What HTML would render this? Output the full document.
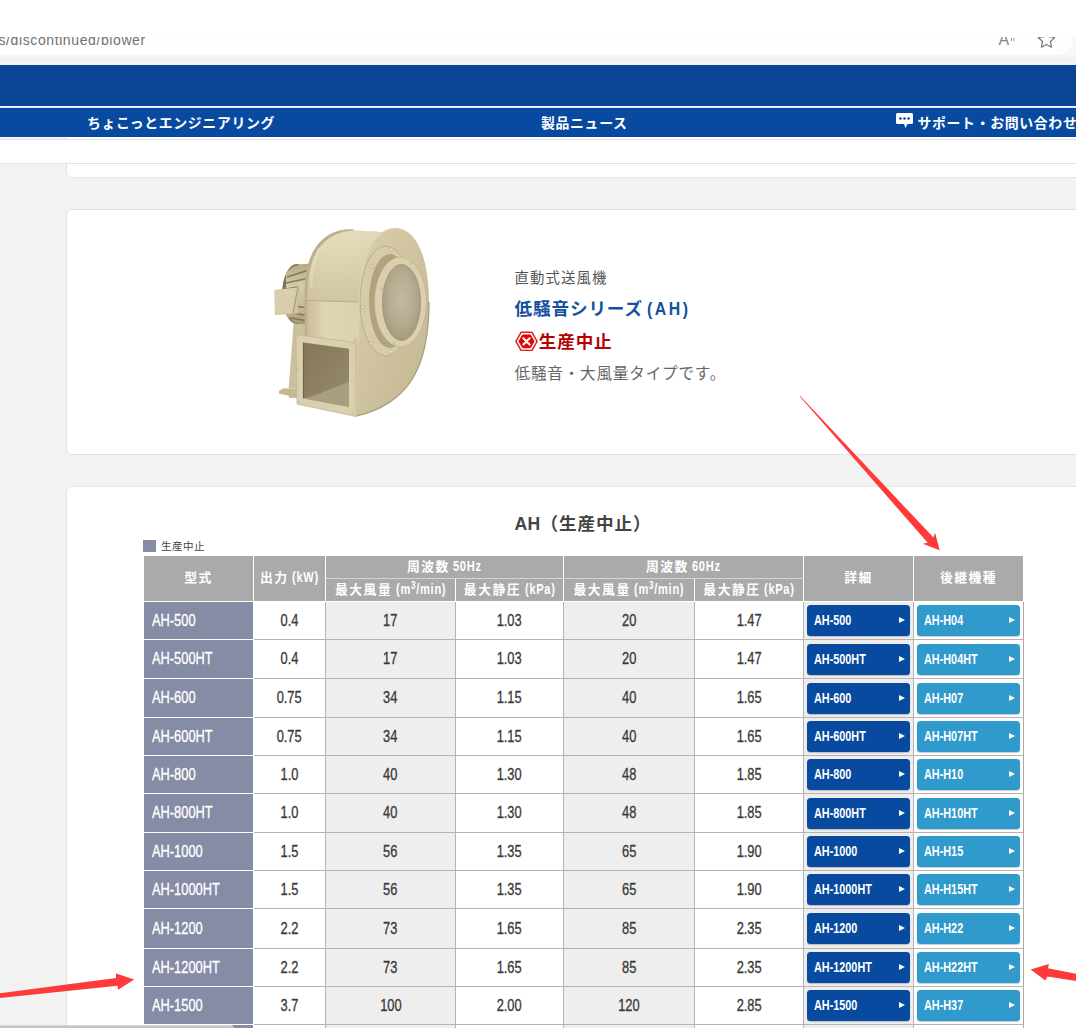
<!DOCTYPE html>
<html lang="ja">
<head>
<meta charset="utf-8">
<title>生産中止機種 送風機</title>
<style>
*{box-sizing:border-box}
html,body{margin:0;padding:0}
html,body{width:1076px;height:1028px;overflow:hidden;background:#f2f2f2}
#page{width:1076px;height:1028px;overflow:hidden;position:relative;background:#f2f2f2;font-family:"Liberation Sans","Noto Sans CJK JP",sans-serif;color:#444}
#chrome{position:absolute;left:0;top:0;width:1076px;height:65px;background:linear-gradient(#fff 0,#fff 37px,#f7f7f7 37px,#f7f7f7 55px,#f5f5f5 56px,#f3f3f3 59px,#ebebeb 59.500px,#f2f2f2 60.500px,#f2f2f2 65px);overflow:hidden}
#urlbar{position:absolute;left:-30px;top:37px;width:1102.500px;height:18.200px;background:#fefefe;border-radius:0 0 15px 15px;overflow:hidden}
#url{position:absolute;left:28.500px;top:-5.700px;font-size:14px;line-height:18px;color:#727272;letter-spacing:.6px;white-space:nowrap}
#ra{position:absolute;left:1028.500px;top:-6px;font-size:16px;line-height:18px;color:#858585}
#ra small{position:absolute;left:12px;top:7px;width:1.200px;height:2.500px;background:#999;box-shadow:2.500px 0 0 #999;font-size:0}
#star{position:absolute;left:1067px;top:-7.500px;width:19px;height:19px}
#top{z-index:5;position:absolute;left:0;top:65px;width:1076px;height:42px;background:#0b4696}
#nav{z-index:5;position:absolute;left:0;top:106px;width:1076px;height:31px;background:linear-gradient(#fff 0,#fff 1px,#dde6f2 1px,#dde6f2 2px,#074a9f 2px);color:#fff;font-weight:bold;font-size:13.900px;letter-spacing:.65px;line-height:29px;white-space:nowrap}
#nav span{position:absolute;top:2.500px}
#nav .n1{left:87px}
#nav .n2{left:541px}
#nav .n3{left:917.500px}
#nav .n3 svg{position:absolute;left:-22px;top:4.500px;width:17px;height:15px}
.card{position:absolute;left:66px;width:1100px;background:#fff;border:1px solid #e3e3e3;border-radius:6px}
#c1{top:100px;height:77.500px}
#sticky{position:absolute;left:-2px;top:139px;width:1080px;height:25px;background:#fff;border:1px solid #e2e2e2}
#c2{top:209px;height:246px}
#c3{top:486px;height:700px}
#fan{position:absolute;left:183px;top:5px;width:210px;height:230px}
#fan svg{width:210px;height:230px;display:block}
#c2 p,#c2 h2{position:absolute;margin:0;left:447.500px;white-space:nowrap;font-weight:normal}
.t1{top:266px;font-size:14.400px;letter-spacing:1.100px;line-height:24px;color:#555}
.t2{top:296px;font-size:17.600px;letter-spacing:.88px;line-height:24px;color:#1550a0;font-weight:bold!important}
.t3{top:329px;font-size:17.600px;letter-spacing:.88px;line-height:24px;color:#b80000;font-weight:bold!important}
.t4{top:361px;font-size:15.600px;letter-spacing:.8px;line-height:24px;color:#666}
#c2 .t1{top:55.500px}#c2 .t2{top:86.500px}#c2 .t3{top:120px}#c2 .t4{top:151.500px}
.t3 svg{position:absolute;left:.2px;top:.8px;width:23px;height:20.700px}
.t3 span{margin-left:24.200px}
.ah{display:inline-block;transform:scaleX(.9);transform-origin:0 50%;letter-spacing:2.800px;margin-left:4.500px}
.ttl{position:absolute;left:5px;top:25px;width:1022px;margin:0;text-align:center;font-size:17.600px;letter-spacing:.88px;line-height:24px;color:#444;font-weight:bold}
.ttl .lat{letter-spacing:.3px}
.legend{position:absolute;left:93.500px;top:51px;font-size:10.500px;letter-spacing:.5px;line-height:16px;color:#444;white-space:nowrap}
.legend i{display:inline-block;width:12.500px;height:12.500px;background:#868ca6;vertical-align:-2px;margin-right:5.500px;margin-left:-17.500px;position:relative;left:0}
.legend{padding-left:17.500px;left:76px}
#tbl{position:absolute;left:76px;top:68px;border-collapse:separate;border-spacing:0;table-layout:fixed;width:881px;font-size:12.800px}
#tbl th,#tbl td{padding:0;border:0 solid #b4b4b4;border-width:0 1px 1px 0;text-align:center;vertical-align:middle;overflow:hidden;white-space:nowrap}
#tbl thead th{background:#aaa;color:#fff;border-color:#fff;font-weight:700;letter-spacing:1.500px;word-spacing:-1.500px;line-height:18px;border-top:1px solid #fff;padding-bottom:2px}
#tbl thead b{font-weight:700}
#tbl thead th.f{border-left:1px solid #fff}
#tbl thead th.u{border-bottom-color:#d4d4d4}
#tbl thead tr.h1{height:24px}
#tbl thead tr.h2{height:23px}
#tbl thead tr.h2 th{border-top:0}
#tbl thead b.s{position:relative;top:0}
#tbl th.rt{background:#868ca6;color:#fff;border-color:#fff;text-align:left;font-weight:normal;border-left:1px solid #fff}
#tbl td.w{background:#fff}
#tbl td.g{background:#eee}
#tbl td:last-child{border-right-color:#aaa}
.cn{-webkit-text-stroke:.32px;display:inline-block;font-size:16.600px;line-height:20px;color:#3a3a3a;transform:scaleX(.774);transform-origin:50% 50%;letter-spacing:0;position:relative;top:0}
.cn.l{color:#fff;transform-origin:0 50%;margin-left:7.500px}
.ch{display:inline-block;font-weight:bold;transform:scaleX(.79);transform-origin:0 50%;letter-spacing:.88px;font-size:14.050px;white-space:nowrap;vertical-align:baseline}
.ch sup{font-size:10.500px;line-height:0;vertical-align:5.500px}
#tbl td.bc{text-align:left}
.btn{display:block;position:relative;margin:0 3px 0 2.700px;height:31px;border-radius:3.500px;color:#fff;font-weight:bold;font-size:14.500px;line-height:31px;box-shadow:0 1px 1px rgba(0,0,0,.2)}
.b1{background:#074a9f}
.b2{background:#309acd}
.cb{display:inline-block;transform:scaleX(.748);transform-origin:0 50%;margin-left:7px}
.btn i{position:absolute;right:5.500px;top:12px;width:0;height:0;border-left:6px solid #fff;border-top:3.200px solid transparent;border-bottom:3.200px solid transparent}
#arrows{position:absolute;left:0;top:0;pointer-events:none}
#hscroll{position:absolute;left:-10px;top:1025px;width:244px;height:8px;border-radius:4px;background:linear-gradient(#d9d9d9 0,#d9d9d9 1px,#c4c4c4 1px)}

</style>
</head>
<body>
<div id="page">
<div id="chrome">
  <div id="urlbar"><div id="url">s/discontinued/blower</div>
    <div id="ra">A<small>”</small></div>
    <svg id="star" viewBox="0 0 20 20"><path d="M10 1.5l2.600 5.600 6 .8-4.400 4.200 1.100 6-5.300-2.900-5.300 2.900 1.100-6L1.400 7.900l6-.8z" fill="none" stroke="#777" stroke-width="1.300" stroke-linejoin="round"/></svg>
  </div>
</div>
<header id="top"></header>
<nav id="nav">
  <span class="n1">ちょこっとエンジニアリング</span>
  <span class="n2">製品ニュース</span>
  <span class="n3"><svg viewBox="0 0 17 15"><path d="M1.500 0h14A1.500 1.500 0 0 1 17 1.500v8A1.500 1.500 0 0 1 15.500 11H11.500L9.500 15 8 11H1.500A1.500 1.500 0 0 1 0 9.500v-8A1.500 1.500 0 0 1 1.500 0z" fill="#fff"/><circle cx="4.500" cy="5.500" r="1.300" fill="#074a9f"/><circle cx="8.500" cy="5.500" r="1.300" fill="#074a9f"/><circle cx="12.500" cy="5.500" r="1.300" fill="#074a9f"/></svg>サポート・お問い合わせ</span>
</nav>
<main>
<section class="card" id="c1"></section>
<div id="sticky"></div>
<section class="card" id="c2">
  <div id="fan"><svg viewBox="250 215 210 230">
<defs>
<linearGradient id="gSide" x1="0" y1="0" x2="1" y2="0"><stop offset="0" stop-color="#cabe9a"/><stop offset=".22" stop-color="#dfd6b6"/><stop offset=".7" stop-color="#dad0ae"/><stop offset="1" stop-color="#c8bc97"/></linearGradient>
<linearGradient id="gSide2" x1="0" y1="0" x2="0" y2="1"><stop offset="0" stop-color="#e6debf"/><stop offset=".5" stop-color="#dbd1af"/><stop offset="1" stop-color="#cdc19d"/></linearGradient>
<linearGradient id="gFront" x1="0" y1="0" x2="1" y2="1"><stop offset="0" stop-color="#d8cdaa"/><stop offset=".5" stop-color="#cfc39f"/><stop offset="1" stop-color="#c2b590"/></linearGradient>
<radialGradient id="gMesh" cx=".5" cy=".45" r=".62"><stop offset="0" stop-color="#c6bea2"/><stop offset=".55" stop-color="#b7ae92"/><stop offset="1" stop-color="#a0957a"/></radialGradient>
<linearGradient id="gHole" x1="0" y1="0" x2="1" y2="1"><stop offset="0" stop-color="#83765a"/><stop offset="1" stop-color="#978b6c"/></linearGradient>
<linearGradient id="gMotor" x1="0" y1="0" x2="0" y2="1"><stop offset="0" stop-color="#b5a984"/><stop offset=".35" stop-color="#d5caa7"/><stop offset=".75" stop-color="#c5b994"/><stop offset="1" stop-color="#9f9370"/></linearGradient>
<pattern id="pm" width="1.6" height="1.6" patternUnits="userSpaceOnUse"><rect width="1.600" height="1.600" fill="none"/><circle cx=".8" cy=".8" r=".35" fill="#8f8466" opacity=".45"/></pattern>
</defs>
<!-- motor -->
<ellipse cx="297" cy="294" rx="15" ry="30" fill="#7f7458"/>
<path d="M286 273c6-7 15-10 25-9v61c-10 1-19-2-25-10z" fill="url(#gMotor)"/>
<path d="M287 277l22-7M286 283l23-5M286 289l12-2M287 305l22 3M288 312l21 4M290 318l19 3" stroke="#7a6f54" stroke-width="1.700" fill="none" opacity=".85"/>
<path d="M274.500 290l23.500-2.500v26l-23 1.500z" fill="#cfc4a0"/>
<path d="M274.500 290l23.500-2.500-5 25-18 2z" fill="#d8ceac"/>
<path d="M298 287.500l-5 25" stroke="#a5997a" stroke-width="1.200"/>
<!-- support leg / side plate -->
<path d="M293.500 324h18v14h-14.500v60h-8l-.5-7z" fill="#cbc09c"/>
<path d="M279 391l4-2.500h15v9.500l-19-4.500z" fill="#c4b893"/>
<path d="M279 391l4-2.500h15" stroke="#ded5b6" stroke-width=".8" fill="none"/>
<!-- back rim -->
<path d="M354 229.500c-21-2-39 10-46 35-4 14-4 32-3 71h6c-1-37 0-53 4-67 6-22 22-35 39-37z" fill="#bdb18c"/>
<!-- housing side -->
<path d="M357 230.500c-23 0-40 12-46.500 37-3 13-4 30-3 70l49.500 8 10-42 22-71z" fill="url(#gSide)"/>
<path d="M357 230.500c-23 0-40 12-46.500 37-2 9-3 19-3 33l51.500 2 30-70z" fill="url(#gSide2)" opacity=".8"/>
<path d="M307.500 300.500l51.500 1.500" stroke="#b9ad88" stroke-width="1"/>
<path d="M320 248c-5 9-9 22-9 40" stroke="#ece5ca" stroke-width="3" fill="none" opacity=".45"/>
<!-- front scroll face -->
<path d="M354 338h6v72l-5 6z" fill="#d3c8a5"/>
<path d="M395.500 228c-20 0-34 26-36 67-1 16-1 30-1 48l-2.500 73c24-5 45-18 57-38 10-17 16-42 16-76 0-45-13-74-33.500-74z" fill="url(#gFront)"/>
<path d="M395.500 228.500c-20 0-34 26-36 66.500-1 16-1 30-1 48" stroke="#ddd4b4" stroke-width="1.400" fill="none"/>
<path d="M356 416c24-5 45-18 57-38 10-17 16-42 16-76" stroke="#ac9f79" stroke-width="1.300" fill="none"/>
<!-- inlet flange plate -->
<ellipse cx="386" cy="301" rx="26" ry="55" fill="#d7ccaa" stroke="#b5a984" stroke-width=".8"/>
<ellipse cx="390" cy="301" rx="21" ry="47" fill="#b0a37e"/>
<!-- bell mouth ring -->
<ellipse cx="400.500" cy="302" rx="26" ry="45" fill="#dad0ae" stroke="#bdb18d" stroke-width=".7"/>
<ellipse cx="401.500" cy="302.500" rx="19" ry="38" fill="url(#gMesh)"/>
<ellipse cx="401.500" cy="302.500" rx="19" ry="38" fill="url(#pm)"/>
<ellipse cx="401.500" cy="302.500" rx="19" ry="38" fill="none" stroke="#a4987a" stroke-width="1"/>
<!-- bolts -->
<g fill="#e3dfd2" stroke="#a3987c" stroke-width=".5"><circle cx="391.500" cy="249.500" r="1.700"/><circle cx="372" cy="266.500" r="1.800"/><circle cx="363" cy="307" r="1.700"/><circle cx="371" cy="343.500" r="1.600"/><circle cx="390.500" cy="351.500" r="1.800"/><circle cx="394" cy="344" r="1.300"/><circle cx="411" cy="263" r="1.200"/><circle cx="382" cy="289" r="1.200"/></g>
<!-- outlet flange -->
<path d="M296 334.500l60.500 8 .5 74.200-60-12.700z" fill="#dad0ae"/>
<path d="M296 334.500l59.500 8 .5 74-59-12.500z" fill="none" stroke="#c2b691" stroke-width=".8"/>
<path d="M303.500 342.500l45.500 6.300v58l-45.500-8.500z" fill="url(#gHole)"/>
<path d="M309 397.500l40-15.500v25l-45.500-8.500z" fill="#a99e80"/>
<path d="M303.500 342.500v56" stroke="#6f6349" stroke-width="1.200"/>
<g fill="#e6e3d8" stroke="#a3987c" stroke-width=".4"><circle cx="323.500" cy="340" r="1.500"/><circle cx="323.500" cy="407.500" r="1.500"/><circle cx="297.800" cy="369" r=".9"/><circle cx="352.500" cy="379.500" r=".9"/><circle cx="298" cy="336.500" r=".9"/><circle cx="352.500" cy="344" r=".9"/><circle cx="298.500" cy="402" r=".9"/><circle cx="352.500" cy="413" r=".9"/></g>
</svg>
</div>
  <p class="t1">直動式送風機</p>
  <h2 class="t2">低騒音シリーズ<span class="ah">(AH)</span></h2>
  <p class="t3"><svg viewBox="0 0 23 20"><path d="M6.200 .8h10.600l5.300 9.200-5.300 9.200H6.200L.9 10z" fill="#fff" stroke="#e02020" stroke-width="1.500" stroke-linejoin="round"/><path d="M7.600 3.600h7.800l3.700 6.400-3.700 6.400H7.600L3.900 10z" fill="#dc0808" stroke="#dc0808" stroke-width="1" stroke-linejoin="round"/><path d="M8.400 6.900l6.200 6.200M14.600 6.900l-6.200 6.200" stroke="#fff" stroke-width="2.100" stroke-linecap="round"/></svg><span>生産中止</span></p>
  <p class="t4">低騒音・大風量タイプです。</p>
</section>
<section class="card" id="c3">
  <h3 class="ttl"><span class="lat">AH</span>（生産中止）</h3>
  <div class="legend"><i></i>生産中止</div>
  <table id="tbl">
    <colgroup><col style="width:111px"><col style="width:72px"><col style="width:130px"><col style="width:108px"><col style="width:131px"><col style="width:109px"><col style="width:110px"><col style="width:110px"></colgroup>
    <thead>
      <tr class="h1"><th rowspan="2" class="f"><b class="s">型式</b></th><th rowspan="2"><b class="s">出力 <span class="ch" style="width:26.82px">(kW)</span></b></th><th colspan="2" class="u">周波数 <span class="ch" style="width:28.69px">50Hz</span></th><th colspan="2" class="u">周波数 <span class="ch" style="width:28.69px">60Hz</span></th><th rowspan="2"><b class="s">詳細</b></th><th rowspan="2"><b class="s">後継機種</b></th></tr>
      <tr class="h2"><th>最大風量 <span class="ch" style="width:50.28px">(m<sup>3</sup>/min)</span></th><th>最大静圧 <span class="ch" style="width:30.61px">(kPa)</span></th><th>最大風量 <span class="ch" style="width:50.28px">(m<sup>3</sup>/min)</span></th><th>最大静圧 <span class="ch" style="width:30.61px">(kPa)</span></th></tr>
    </thead>
    <tbody>
      <tr style="height:38px"><th class="rt"><span class="cn l">AH-500</span></th><td class="w"><span class="cn">0.4</span></td><td class="g"><span class="cn">17</span></td><td class="w"><span class="cn">1.03</span></td><td class="g"><span class="cn">20</span></td><td class="w"><span class="cn">1.47</span></td><td class="g bc"><a class="btn b1"><span class="cb">AH-500</span><i></i></a></td><td class="w bc"><a class="btn b2"><span class="cb">AH-H04</span><i></i></a></td></tr>
      <tr style="height:39px"><th class="rt"><span class="cn l">AH-500HT</span></th><td class="w"><span class="cn">0.4</span></td><td class="g"><span class="cn">17</span></td><td class="w"><span class="cn">1.03</span></td><td class="g"><span class="cn">20</span></td><td class="w"><span class="cn">1.47</span></td><td class="g bc"><a class="btn b1"><span class="cb">AH-500HT</span><i></i></a></td><td class="w bc"><a class="btn b2"><span class="cb">AH-H04HT</span><i></i></a></td></tr>
      <tr style="height:39px"><th class="rt"><span class="cn l">AH-600</span></th><td class="w"><span class="cn">0.75</span></td><td class="g"><span class="cn">34</span></td><td class="w"><span class="cn">1.15</span></td><td class="g"><span class="cn">40</span></td><td class="w"><span class="cn">1.65</span></td><td class="g bc"><a class="btn b1"><span class="cb">AH-600</span><i></i></a></td><td class="w bc"><a class="btn b2"><span class="cb">AH-H07</span><i></i></a></td></tr>
      <tr style="height:38px"><th class="rt"><span class="cn l">AH-600HT</span></th><td class="w"><span class="cn">0.75</span></td><td class="g"><span class="cn">34</span></td><td class="w"><span class="cn">1.15</span></td><td class="g"><span class="cn">40</span></td><td class="w"><span class="cn">1.65</span></td><td class="g bc"><a class="btn b1"><span class="cb">AH-600HT</span><i></i></a></td><td class="w bc"><a class="btn b2"><span class="cb">AH-H07HT</span><i></i></a></td></tr>
      <tr style="height:38px"><th class="rt"><span class="cn l">AH-800</span></th><td class="w"><span class="cn">1.0</span></td><td class="g"><span class="cn">40</span></td><td class="w"><span class="cn">1.30</span></td><td class="g"><span class="cn">48</span></td><td class="w"><span class="cn">1.85</span></td><td class="g bc"><a class="btn b1"><span class="cb">AH-800</span><i></i></a></td><td class="w bc"><a class="btn b2"><span class="cb">AH-H10</span><i></i></a></td></tr>
      <tr style="height:39px"><th class="rt"><span class="cn l">AH-800HT</span></th><td class="w"><span class="cn">1.0</span></td><td class="g"><span class="cn">40</span></td><td class="w"><span class="cn">1.30</span></td><td class="g"><span class="cn">48</span></td><td class="w"><span class="cn">1.85</span></td><td class="g bc"><a class="btn b1"><span class="cb">AH-800HT</span><i></i></a></td><td class="w bc"><a class="btn b2"><span class="cb">AH-H10HT</span><i></i></a></td></tr>
      <tr style="height:38px"><th class="rt"><span class="cn l">AH-1000</span></th><td class="w"><span class="cn">1.5</span></td><td class="g"><span class="cn">56</span></td><td class="w"><span class="cn">1.35</span></td><td class="g"><span class="cn">65</span></td><td class="w"><span class="cn">1.90</span></td><td class="g bc"><a class="btn b1"><span class="cb">AH-1000</span><i></i></a></td><td class="w bc"><a class="btn b2"><span class="cb">AH-H15</span><i></i></a></td></tr>
      <tr style="height:38px"><th class="rt"><span class="cn l">AH-1000HT</span></th><td class="w"><span class="cn">1.5</span></td><td class="g"><span class="cn">56</span></td><td class="w"><span class="cn">1.35</span></td><td class="g"><span class="cn">65</span></td><td class="w"><span class="cn">1.90</span></td><td class="g bc"><a class="btn b1"><span class="cb">AH-1000HT</span><i></i></a></td><td class="w bc"><a class="btn b2"><span class="cb">AH-H15HT</span><i></i></a></td></tr>
      <tr style="height:40px"><th class="rt"><span class="cn l">AH-1200</span></th><td class="w"><span class="cn">2.2</span></td><td class="g"><span class="cn">73</span></td><td class="w"><span class="cn">1.65</span></td><td class="g"><span class="cn">85</span></td><td class="w"><span class="cn">2.35</span></td><td class="g bc"><a class="btn b1"><span class="cb">AH-1200</span><i></i></a></td><td class="w bc"><a class="btn b2"><span class="cb">AH-H22</span><i></i></a></td></tr>
      <tr style="height:38px"><th class="rt"><span class="cn l">AH-1200HT</span></th><td class="w"><span class="cn">2.2</span></td><td class="g"><span class="cn">73</span></td><td class="w"><span class="cn">1.65</span></td><td class="g"><span class="cn">85</span></td><td class="w"><span class="cn">2.35</span></td><td class="g bc"><a class="btn b1"><span class="cb">AH-1200HT</span><i></i></a></td><td class="w bc"><a class="btn b2"><span class="cb">AH-H22HT</span><i></i></a></td></tr>
      <tr style="height:38px"><th class="rt"><span class="cn l">AH-1500</span></th><td class="w"><span class="cn">3.7</span></td><td class="g"><span class="cn">100</span></td><td class="w"><span class="cn">2.00</span></td><td class="g"><span class="cn">120</span></td><td class="w"><span class="cn">2.85</span></td><td class="g bc"><a class="btn b1"><span class="cb">AH-1500</span><i></i></a></td><td class="w bc"><a class="btn b2"><span class="cb">AH-H37</span><i></i></a></td></tr>
      <tr style="height:38px"><th class="rt"><span class="cn l">AH-1500HT</span></th><td class="w"><span class="cn">3.7</span></td><td class="g"><span class="cn">100</span></td><td class="w"><span class="cn">2.00</span></td><td class="g"><span class="cn">120</span></td><td class="w"><span class="cn">2.85</span></td><td class="g bc"><a class="btn b1"><span class="cb">AH-1500HT</span><i></i></a></td><td class="w bc"><a class="btn b2"><span class="cb">AH-H37HT</span><i></i></a></td></tr>
    </tbody>
  </table>
</section>
</main>
<svg id="arrows" width="1076" height="1028" viewBox="0 0 1076 1028">
  <polygon points="799.8,396.5 927.7,542.8 922.7,543.8 939.7,550.2 935.0,532.6 933.5,537.6 800.2,396.1" fill="#ff3a3a"/>
  <polygon points="-40,998.500 116,977.900 116,973.500 134.100,979.400 118.200,989.800 117.500,985.800 -40,1002.300" fill="#ff3a3a"/>
  <polygon points="1030.600,969.400 1048.900,963.900 1048,968.300 1090,976.500 1090,983.100 1047.300,976.400 1045.400,980.500" fill="#ff3a3a"/>
</svg>
<div id="hscroll"></div>
</div>
</body>
</html>
